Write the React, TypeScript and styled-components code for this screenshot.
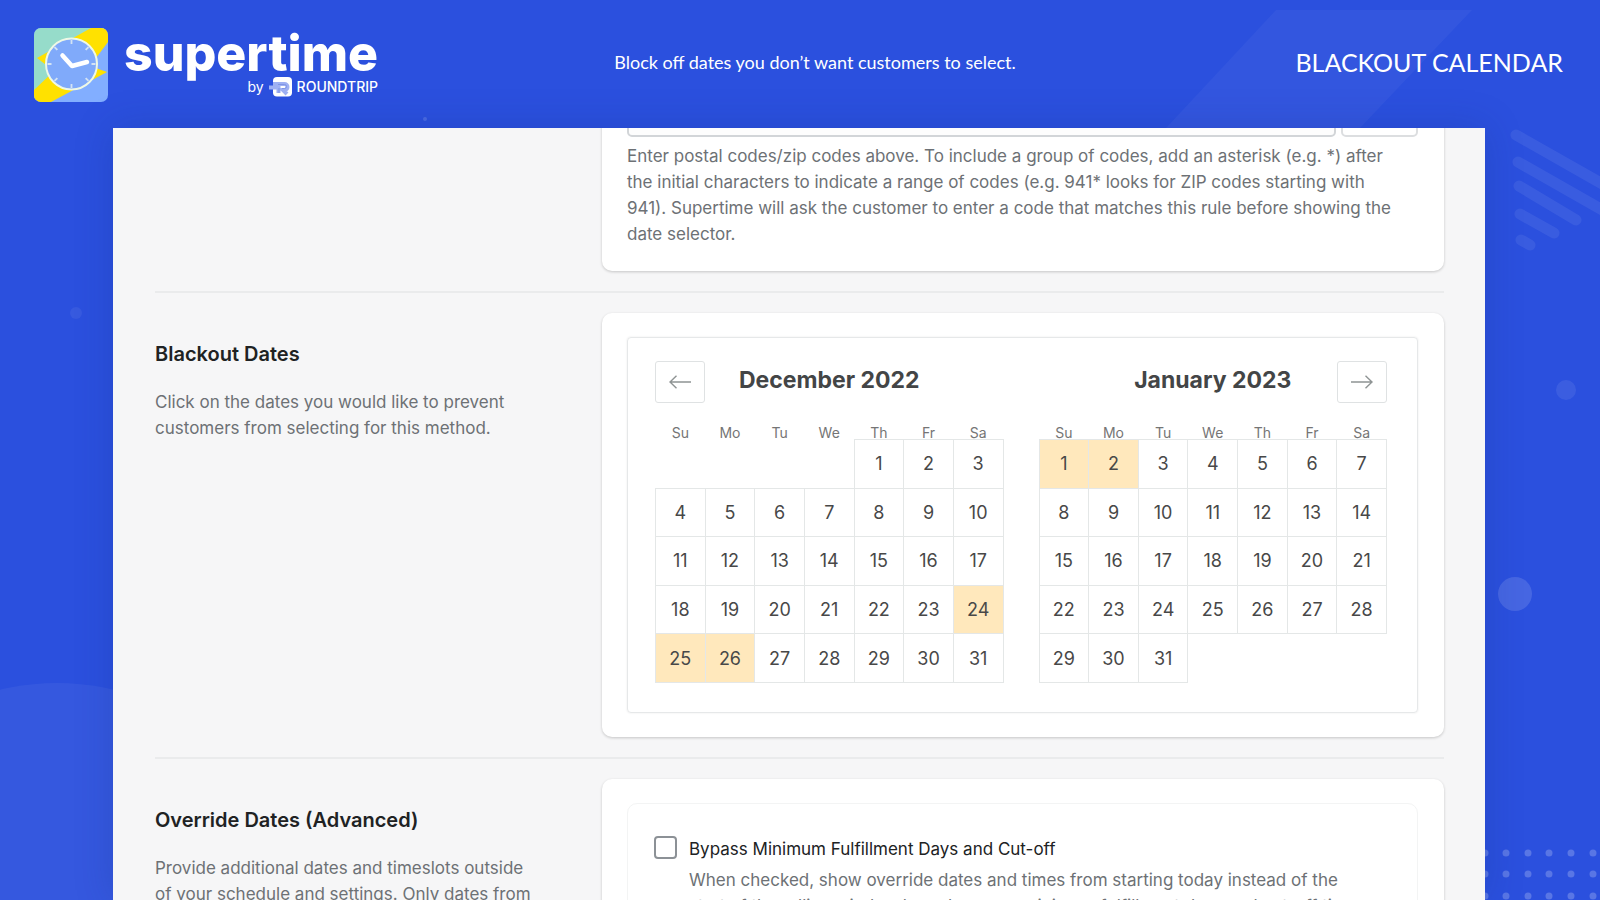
import React, { useState } from "react";
import styled, { createGlobalStyle } from "styled-components";

const GlobalStyle = createGlobalStyle`
  *, *::before, *::after { box-sizing: border-box; }
  body {
    margin: 0;
    background: #2b50de;
    font-family: Inter, "Liberation Sans", sans-serif;
    color: #202223;
  }
  h1, h2, p { margin: 0; }
  button, input { font: inherit; color: inherit; }
`;

const Page = styled.div`
  position: relative;
  isolation: isolate;
  display: flex;
  flex-direction: column;
  height: 100vh;
  overflow: hidden;
`;

const Backdrop = styled.svg`
  position: absolute;
  inset: 0;
  z-index: -1;
  width: 100%;
  height: 100%;
`;

const Header = styled.header`
  display: grid;
  grid-template-columns: 1fr auto 1fr;
  align-items: center;
  flex: none;
  height: 128px;
  padding: 2px 37px 0 34px;
  color: #fff;
  font-family: Lato, "Noto Sans", sans-serif;
`;

const Brand = styled.a`
  display: flex;
  align-items: center;
  gap: 16px;
  justify-self: start;
  color: inherit;
  text-decoration: none;
  font-family: Inter, sans-serif;
`;

const BrandText = styled.span`
  display: flex;
  flex-direction: column;
  align-items: flex-end;
  padding-bottom: 4px;
`;

const Wordmark = styled.span`
  font-size: 50px;
  line-height: 48px;
  font-weight: 800;
`;

const Byline = styled.span`
  display: flex;
  align-items: center;
  gap: 5px;
  font-size: 14px;
  line-height: 20px;
`;

const Company = styled.span`
  font-weight: 500;
`;

const Tagline = styled.p`
  padding: 0 0 6px 33px;
  font-size: 18px;
  line-height: 24px;
`;

const Title = styled.h1`
  justify-self: end;
  padding-bottom: 6px;
  font-size: 25px;
  line-height: 30px;
  font-weight: 400;
`;

const Panel = styled.main`
  flex: 1;
  min-height: 0;
  margin: 0 115px 0 113px;
  padding: 0 41px 0 42px;
  background: #f6f6f7;
  box-shadow: 0 0 36px rgba(20, 50, 130, 0.24);
  overflow: hidden;
`;

const Section = styled.section<{ $scrolled?: boolean }>`
  display: grid;
  grid-template-columns: minmax(0, 1fr) minmax(0, 2fr);
  column-gap: 26px;
  align-items: start;
  align-content: ${(p) => (p.$scrolled ? "end" : "start")};
  height: ${(p) => (p.$scrolled ? "163px" : "auto")};
  padding: ${(p) => (p.$scrolled ? "0 0 20px" : "20px 0")};

  & + & {
    border-top: 2px solid #eaebec;
  }
`;

const Intro = styled.div`
  padding: 28px 26px 0 0;
`;

const Heading = styled.h2`
  margin-bottom: 22px;
  font-size: 20px;
  line-height: 26px;
  font-weight: 600;
`;

const Muted = styled.p`
  padding-right: 12px;
  color: #6d7175;
  font-size: 17px;
  line-height: 26px;
`;

const Card = styled.div`
  grid-column: 2;
  padding: 24px 26px 24px 25px;
  border-radius: 10px;
  background: #fff;
  box-shadow: 0 1px 3px rgba(0, 0, 0, 0.2);
`;

const CodeRow = styled.div`
  display: grid;
  grid-template-columns: minmax(0, 1fr) 77px;
  gap: 5px;
  margin-bottom: 6px;
`;

const CodeInput = styled.input`
  height: 46px;
  padding: 0 14px;
  border: 2px solid #d2d5d8;
  border-radius: 5px;
  background: #fdfdfd;
`;

const AddButton = styled.button`
  height: 46px;
  border: 2px solid #dcdee0;
  border-radius: 5px;
  background: #fff;
`;

const Calendar = styled.div`
  display: grid;
  grid-template-columns: minmax(0, 1fr) minmax(0, 1fr);
  column-gap: 35px;
  padding: 23px 30px 29px 27px;
  border: 1px solid #e6e8e9;
  border-radius: 4px;
  box-shadow: 0 0 2px rgba(0, 0, 0, 0.1);
`;

const NavButton = styled.button<{ $side: "start" | "end" }>`
  grid-area: ${(p) => (p.$side === "start" ? "1 / 1" : "1 / 2")};
  justify-self: ${(p) => p.$side};
  align-self: start;
  display: grid;
  place-items: center;
  z-index: 1;
  width: 50px;
  height: 42px;
  padding: 0;
  border: 1px solid #dfe2e3;
  border-radius: 3px;
  background: #fff;
  cursor: pointer;
`;

const MonthTable = styled.table<{ $column: number }>`
  grid-area: 1 / ${(p) => p.$column};
  width: 100%;
  height: 256px;
  border-collapse: collapse;
  table-layout: fixed;
`;

const MonthName = styled.caption`
  padding-bottom: 28px;
  color: #434546;
  font-size: 23px;
  line-height: 38px;
  font-weight: 700;
`;

const Weekday = styled.th`
  height: 12px;
  padding: 0;
  color: #757575;
  font-size: 14px;
  line-height: 12px;
  font-weight: 400;
`;

const DayCell = styled.td<{ $blocked: boolean }>`
  padding: 0;
  border: 1px solid #e4e7e7;
  background: ${(p) => (p.$blocked ? "#ffe8bc" : "#fff")};
`;

const EmptyCell = styled.td`
  padding: 0;
`;

const DayButton = styled.button`
  display: block;
  width: 100%;
  padding: 1px 0 0;
  border: 0;
  background: transparent;
  color: #484848;
  font-size: 18px;
  line-height: 46px;
  cursor: pointer;
`;

const OptionBox = styled.div`
  display: grid;
  grid-template-columns: 23px minmax(0, 1fr);
  column-gap: 12px;
  padding: 32px 28px 32px 26px;
  border: 1px solid #f3f4f4;
  border-radius: 10px;
`;

const Checkbox = styled.input`
  appearance: none;
  width: 23px;
  height: 23px;
  margin: 0;
  border: 2px solid #8c9196;
  border-radius: 4px;
  background: #fff;

  &:checked {
    background: #2b50de;
  }
`;

const OptionLabel = styled.label`
  margin-bottom: 5px;
  font-size: 17px;
  line-height: 26px;
`;

const OptionHelp = styled(Muted)`
  grid-column: 2;
`;

const WEEKDAYS = ["Su", "Mo", "Tu", "We", "Th", "Fr", "Sa"];

function monthWeeks(year: number, month: number): (number | null)[][] {
  const offset = new Date(year, month, 1).getDay();
  const length = new Date(year, month + 1, 0).getDate();
  const weeks: (number | null)[][] = [];
  for (let start = 1 - offset; start <= length; start += 7) {
    weeks.push(
      WEEKDAYS.map((_, i) => {
        const day = start + i;
        return day >= 1 && day <= length ? day : null;
      })
    );
  }
  return weeks;
}

type MonthProps = {
  name: string;
  year: number;
  month: number;
  column: number;
  blocked: string[];
  onToggle: (key: string) => void;
};

function Month({ name, year, month, column, blocked, onToggle }: MonthProps) {
  return (
    <MonthTable $column={column}>
      <MonthName>
        {name} {year}
      </MonthName>
      <thead>
        <tr>
          {WEEKDAYS.map((d) => (
            <Weekday key={d} scope="col">
              {d}
            </Weekday>
          ))}
        </tr>
      </thead>
      <tbody>
        {monthWeeks(year, month).map((week, w) => (
          <tr key={w}>
            {week.map((day, i) => {
              if (day === null) return <EmptyCell key={i} />;
              const key = `${year}-${month + 1}-${day}`;
              const isBlocked = blocked.includes(key);
              return (
                <DayCell key={i} $blocked={isBlocked}>
                  <DayButton type="button" aria-pressed={isBlocked} onClick={() => onToggle(key)}>
                    {day}
                  </DayButton>
                </DayCell>
              );
            })}
          </tr>
        ))}
      </tbody>
    </MonthTable>
  );
}

function Arrow({ flip }: { flip?: boolean }) {
  return (
    <svg width="22" height="14" viewBox="0 0 22 14" fill="none" stroke="#8f9494" strokeWidth="1.4" aria-hidden="true">
      <path d={flip ? "M0 7h21M14.500 .7 21 7l-6.500 6.300" : "M22 7H1M7.500 .7 1 7l6.500 6.300"} />
    </svg>
  );
}

function ClockLogo() {
  return (
    <svg width="74" height="74" viewBox="0 0 74 74" aria-hidden="true">
      <defs>
        <clipPath id="tile">
          <rect width="74" height="74" rx="7" />
        </clipPath>
      </defs>
      <g clipPath="url(#tile)">
        <rect width="74" height="74" fill="#82aeff" />
        <path d="M0 0H74L0 74Z" fill="#96dcca" />
        <path d="M3 30 57 0H74V14L56 38 73 44 17 74H0V62L20 43Z" fill="#ffe100" />
        <circle cx="37.500" cy="36" r="25.500" fill="#80aafa" stroke="#eef8e6" strokeWidth="2" />
        <g stroke="#d3e3f4" strokeWidth="1.800">
          {[0, 45, 90, 135, 180, 225, 270, 315].map((a) => (
            <path key={a} d="M37.500 12v4" transform={`rotate(${a} 37.500 36)`} />
          ))}
        </g>
        <path
          d="M28.500 27.500 38 38 53 34"
          fill="none"
          stroke="#fff"
          strokeWidth="4.500"
          strokeLinecap="round"
          strokeLinejoin="round"
        />
      </g>
    </svg>
  );
}

function RoundtripLogo() {
  return (
    <svg width="23" height="20" viewBox="0 0 23 20" fill="none" aria-hidden="true">
      <rect x="4" width="19" height="19.500" rx="4" fill="#fff" />
      <path d="M0 10.500h11.500M4 7h11.500a2.500 2.500 0 0 1 0 6H14l4 4M9.500 6v10" stroke="#9eb0f3" strokeWidth="4" />
      <path d="M9 7.500h6.500a2 2 0 0 1 0 4H13M10 11v5" stroke="#7f95e6" strokeWidth="1" />
    </svg>
  );
}

const DOT_COLUMNS = [1485, 1506, 1528, 1549, 1571, 1593];
const DOT_ROWS = [853, 874, 896];

function Decoration() {
  return (
    <Backdrop viewBox="0 0 1600 900" preserveAspectRatio="xMidYMid slice" aria-hidden="true">
      <g fill="#fff">
        <path d="M1276 10h196L1360 128h-194z" fillOpacity=".04" />
        <circle cx="57" cy="923" r="240" fillOpacity=".05" />
        <circle cx="76" cy="313" r="6" fillOpacity=".06" />
        <circle cx="1566" cy="390" r="10" fillOpacity=".08" />
        <circle cx="1515" cy="594" r="17" fillOpacity=".13" />
        <circle cx="425" cy="119" r="2" fillOpacity=".15" />
        <g fillOpacity=".22">
          {DOT_ROWS.map((y) => DOT_COLUMNS.map((x) => <circle key={`${x}-${y}`} cx={x} cy={y} r="3.500" />))}
        </g>
      </g>
      <path
        d="M1516 135 1620 194M1518 162 1620 220M1519 186 1576 220M1520 214 1554 233M1521 240 1530 245"
        fill="none"
        stroke="#fff"
        strokeOpacity=".07"
        strokeWidth="11"
        strokeLinecap="round"
      />
    </Backdrop>
  );
}

export default function App() {
  const [blocked, setBlocked] = useState<string[]>([
    "2022-12-24",
    "2022-12-25",
    "2022-12-26",
    "2023-1-1",
    "2023-1-2",
  ]);
  const toggle = (key: string) =>
    setBlocked((list) => (list.includes(key) ? list.filter((k) => k !== key) : [...list, key]));

  return (
    <Page>
      <GlobalStyle />
      <Decoration />
      <Header>
        <Brand href="#">
          <ClockLogo />
          <BrandText>
            <Wordmark>supertime</Wordmark>
            <Byline>
              by <RoundtripLogo /> <Company>ROUNDTRIP</Company>
            </Byline>
          </BrandText>
        </Brand>
        <Tagline>Block off dates you don’t want customers to select.</Tagline>
        <Title>BLACKOUT CALENDAR</Title>
      </Header>
      <Panel>
        <Section $scrolled>
          <Card>
            <CodeRow>
              <CodeInput type="text" aria-label="Postal codes" />
              <AddButton type="button" aria-label="Add postal code" />
            </CodeRow>
            <Muted>
              Enter postal codes/zip codes above. To include a group of codes, add an asterisk (e.g. *) after the
              initial characters to indicate a range of codes (e.g. 941* looks for ZIP codes starting with 941).
              Supertime will ask the customer to enter a code that matches this rule before showing the date selector.
            </Muted>
          </Card>
        </Section>
        <Section>
          <Intro>
            <Heading>Blackout Dates</Heading>
            <Muted>Click on the dates you would like to prevent customers from selecting for this method.</Muted>
          </Intro>
          <Card>
            <Calendar>
              <NavButton type="button" $side="start" aria-label="Previous month">
                <Arrow />
              </NavButton>
              <Month name="December" year={2022} month={11} column={1} blocked={blocked} onToggle={toggle} />
              <Month name="January" year={2023} month={0} column={2} blocked={blocked} onToggle={toggle} />
              <NavButton type="button" $side="end" aria-label="Next month">
                <Arrow flip />
              </NavButton>
            </Calendar>
          </Card>
        </Section>
        <Section>
          <Intro>
            <Heading>Override Dates (Advanced)</Heading>
            <Muted>
              Provide additional dates and timeslots outside of your schedule and settings. Only dates from
            </Muted>
          </Intro>
          <Card>
            <OptionBox>
              <Checkbox type="checkbox" id="bypass" />
              <OptionLabel htmlFor="bypass">Bypass Minimum Fulfillment Days and Cut-off</OptionLabel>
              <OptionHelp>
                When checked, show override dates and times from starting today instead of the start of the rolling
                window based on your minimum fulfillment days and cut-off time.
              </OptionHelp>
            </OptionBox>
          </Card>
        </Section>
      </Panel>
    </Page>
  );
}
